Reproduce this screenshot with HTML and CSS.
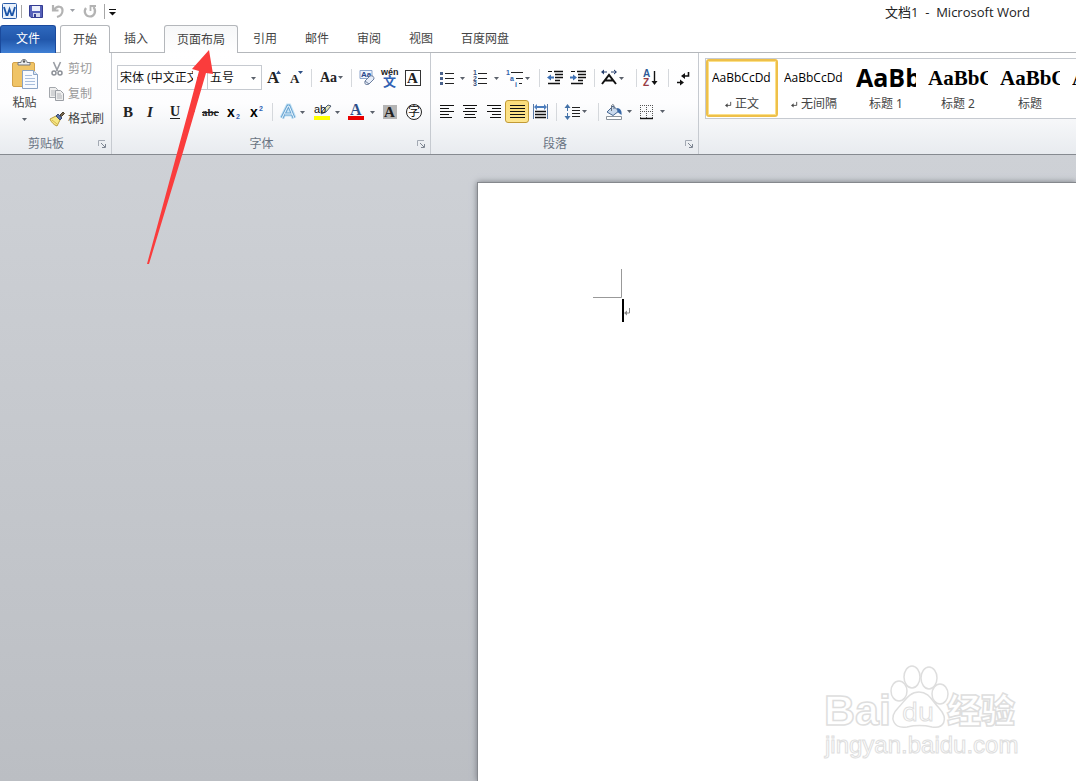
FILE: index.html
```html
<!DOCTYPE html>
<html lang="zh-CN">
<head>
<meta charset="utf-8">
<title>文档1 - Microsoft Word</title>
<link rel="stylesheet" href="styles.css">
</head>
<body>
<svg class="defs" aria-hidden="true">
  <defs>
    <symbol id="caret" viewBox="0 0 5 3"><path d="M0 0h5L2.500 3z" fill="#5b616b"/></symbol>
    <symbol id="launch" viewBox="0 0 9 9"><path d="M.5 6V.5H7" fill="none" stroke="#a3a9b3"/><path d="M3 3l4 4M7.500 4v3.500H4" fill="none" stroke="#7d8591"/></symbol>
    <symbol id="ret" viewBox="0 0 8 8"><path d="M6.500 1v4H2" fill="none" stroke="#444"/><path d="M0 5l3-2.500v5z" fill="#444"/></symbol>
  </defs>
</svg>
<div class="app">
  <header class="titlebar">
    <div class="quick">
      <svg width="118" height="24" viewBox="0 0 118 24">
        <rect x="2.500" y="3.500" width="14" height="15" rx="1" fill="#e9f1fb" stroke="#2a5ca8"/>
        <path d="M4 7l2.500 8h1l2-6 2 6h1L15 7" fill="none" stroke="#1d56a8" stroke-width="1.800"/>
        <path d="M21.500 5v13M104.500 4v15" stroke="#a6a6a6"/>
        <path d="M29.500 5.500h13v12H31l-1.500-1.500z" fill="#5560b8" stroke="#343c92"/>
        <path d="M32 6h8v5h-8z" fill="#eef1fb"/><path d="M33 13h7v4h-7z" fill="#d4d8ee"/><path d="M34 14h2v3h-2z" fill="#343c92"/>
        <path d="M53 5v5.500h5.500M54 10c3-5 9-4 8.500 1-.2 3-2 5-5.500 6" fill="none" stroke="#b3b3b3" stroke-width="2.200"/>
        <use href="#caret" x="70" y="9" width="5" height="3" opacity=".6"/>
        <path d="M86 8c-3 4 0 8.500 4 8.500s7-5 3.500-9.500" fill="none" stroke="#b3b3b3" stroke-width="2.200"/><path d="M90.500 11V6H96" fill="none" stroke="#b3b3b3" stroke-width="1.800"/>
        <path d="M109 9.500h7" stroke="#111"/><path d="M109 12h7l-3.500 3.500z" fill="#111"/>
      </svg>
    </div>
    <h1 class="title">文档1&nbsp; -&nbsp; Microsoft Word</h1>
  </header>

  <nav class="tabs">
    <button class="tab file">文件</button>
    <button class="tab active">开始</button>
    <button class="tab">插入</button>
    <button class="tab hover">页面布局</button>
    <button class="tab">引用</button>
    <button class="tab">邮件</button>
    <button class="tab">审阅</button>
    <button class="tab">视图</button>
    <button class="tab">百度网盘</button>
  </nav>

  <main class="ribbon">
    <section class="group clipboard">
      <div class="clip-body">
        <button class="paste">
          <svg width="28" height="32" viewBox="0 0 28 32">
            <rect x="1.500" y="4.500" width="22" height="24" rx="1.500" fill="#f0c466" stroke="#d3a24a"/>
            <path d="M7 7V4.500h3C10 .5 16 .5 16 4.500h3V7z" fill="#eceef0" stroke="#72777e"/><circle cx="13" cy="3.500" r="1.200" fill="#555"/>
            <path d="M11.500 12.500h11l4 4v14h-15z" fill="#f8fbff" stroke="#8aa3c4"/><path d="M22.500 12.500v4h4" fill="#d8e5f5" stroke="#8aa3c4"/>
            <path d="M14 17.500h7M14 20.500h10M14 23.500h10M14 26.500h10" stroke="#a9bfdd"/>
          </svg>
          <span>粘贴</span>
          <svg width="5" height="3"><use href="#caret"/></svg>
        </button>
        <div class="clip-list">
          <button class="item off" disabled>
            <svg width="16" height="16" viewBox="0 0 16 16"><path d="M4.500 1l4 9M11.500 1l-4 9" stroke="#999da4" stroke-width="1.600"/><circle cx="5" cy="12" r="2" fill="none" stroke="#8c9097" stroke-width="1.500"/><circle cx="11" cy="12" r="2" fill="none" stroke="#8c9097" stroke-width="1.500"/></svg>剪切</button>
          <button class="item off" disabled>
            <svg width="16" height="16" viewBox="0 0 16 16"><path d="M.5 1.500h6l2 2v8h-8z" fill="#eee" stroke="#a3a7ac"/><path d="M2 5h4M2 7h4M2 9h4" stroke="#b6b9bd"/><path d="M6.500 4.500h5l3 3v7h-8z" fill="#eee" stroke="#9a9ea4"/><path d="M8 8h4M8 10h5M8 12h5" stroke="#b0b3b8"/></svg>复制</button>
          <button class="item">
            <svg width="16" height="16" viewBox="0 0 16 16"><path d="M1 8l6-3 4 4-3 6C5 14 2 11 1 8z" fill="#f7e884" stroke="#b99c3c"/><path d="M3 9l5 4" stroke="#d5b650"/><path d="M7 5l2-2 4 4-2 2z" fill="#5b72a4" stroke="#3c4d74"/><path d="M11 4l3-3 1.500 1.500-3 3z" fill="#77664e" stroke="#4a4031"/></svg>格式刷</button>
        </div>
      </div>
      <footer class="foot"><span>剪贴板</span><button aria-label="剪贴板选项"><svg width="9" height="9"><use href="#launch"/></svg></button></footer>
    </section>

    <section class="group font">
      <div class="rows">
        <div class="row first">
          <label class="combo name"><select aria-label="字体"><option>宋体 (中文正文)</option></select><svg width="5" height="3"><use href="#caret"/></svg></label>
          <label class="combo size"><select aria-label="字号"><option>五号</option></select><svg width="5" height="3"><use href="#caret"/></svg></label>
          <button class="w23" aria-label="增大字体"><svg width="23" height="24"><text x="5" y="17" class="serif" font-size="17">A</text><path d="M14 8l2.500-3.500L19 8z" fill="#2e5086"/></svg></button>
          <button class="w23" aria-label="缩小字体"><svg width="23" height="24"><text x="5" y="17" class="serif" font-size="13">A</text><path d="M13 5h5l-2.500 3z" fill="#2e5086"/></svg></button>
          <i class="sep"></i>
          <button class="w34" aria-label="更改大小写"><svg width="34" height="24"><text x="5" y="16" class="serif" font-size="14">Aa</text><use href="#caret" x="23" y="10" width="5" height="3"/></svg></button>
          <i class="sep"></i>
          <button class="w23" aria-label="清除格式"><svg width="23" height="24"><path d="M5 4.500h12v8H5z" fill="#edf3fc" stroke="#8ba3ca"/><text x="6" y="11" class="sans" font-size="8" font-weight="bold" fill="#26468a">Aa</text><path d="M10 15l5-5q4-1 4 3l-5 5q-5 2-4-3z" fill="#e7edf8" stroke="#6d7f9e"/><path d="M10 15l4 3" stroke="#6d7f9e"/></svg></button>
          <button class="w23" aria-label="拼音指南"><svg width="23" height="24"><text x="3" y="9" class="sans" font-size="9" font-weight="bold" fill="#222">wén</text><text x="5" y="20" class="cjk" font-size="13" font-weight="bold" fill="#2f61b3">文</text></svg></button>
          <button class="w23" aria-label="字符边框"><svg width="23" height="24"><rect x="4.500" y="4.500" width="15" height="15" fill="#fff" stroke="#333"/><text x="6" y="17" class="serif" font-size="15">A</text></svg></button>
        </div>
        <div class="row second">
          <button class="w23" aria-label="加粗"><svg width="23" height="24"><text x="6" y="17" class="serif" font-size="15">B</text></svg></button>
          <button class="w23" aria-label="倾斜"><svg width="23" height="24"><text x="7" y="17" class="serif" font-size="15" font-style="italic">I</text></svg></button>
          <button class="w36" aria-label="下划线"><svg width="36" height="24"><text x="7" y="16" class="serif" font-size="14">U</text><path d="M7 18.500h10" stroke="#222"/><use href="#caret" x="27" y="11" width="5" height="3"/></svg></button>
          <button class="w23" aria-label="删除线"><svg width="23" height="24"><text x="3" y="16" class="serif" font-size="11">abc</text><path d="M3 12.500h17" stroke="#222"/></svg></button>
          <button class="w23" aria-label="下标"><svg width="23" height="24"><text x="5" y="17" class="sans" font-size="14" font-weight="bold">x</text><text x="14" y="19" class="sans" font-size="7" font-weight="bold" fill="#2f61b3">2</text></svg></button>
          <button class="w23" aria-label="上标"><svg width="23" height="24"><text x="5" y="17" class="sans" font-size="14" font-weight="bold">x</text><text x="14" y="11" class="sans" font-size="7" font-weight="bold" fill="#2f61b3">2</text></svg></button>
          <i class="sep"></i>
          <button class="w34" aria-label="文本效果"><svg width="34" height="24"><path d="M5 18L11 6h1l5 12M8 14h7" fill="none" stroke="#c3e2f5" stroke-width="5"/><path d="M5 18L11 6h1l5 12M8 14h7" fill="none" stroke="#6ba5d2" stroke-width="3"/><path d="M5 18L11 6h1l5 12M8 14h7" fill="none" stroke="#edf8ff"/><use href="#caret" x="23" y="11" width="5" height="3"/></svg></button>
          <button class="w34" aria-label="突出显示"><svg width="34" height="24"><path d="M3 16h16v4H3z" fill="#ff0"/><path d="M10 14l2-4 5-5 3 1-5 6z" fill="#e7e5b9" stroke="#4d5b70"/><text x="3" y="13" class="sans" font-size="11" fill="#111">ab</text><use href="#caret" x="24" y="11" width="5" height="3"/></svg></button>
          <button class="w34" aria-label="字体颜色"><svg width="34" height="24"><text x="5" y="15" class="serif blue" font-size="16">A</text><path d="M3 16h16v4H3z" fill="#e80000"/><use href="#caret" x="25" y="11" width="5" height="3"/></svg></button>
          <button class="w23" aria-label="字符底纹"><svg width="23" height="24"><path d="M4 5h14v14H4z" fill="#b5b5b5"/><text x="5" y="17" class="serif" font-size="15">A</text></svg></button>
          <button class="w23" aria-label="带圈字符"><svg width="23" height="24"><circle cx="12" cy="12" r="7.500" fill="#fff" stroke="#222"/><text x="6" y="16" class="cjk" font-size="12" fill="#111">字</text></svg></button>
        </div>
      </div>
      <footer class="foot"><span>字体</span><button aria-label="字体选项"><svg width="9" height="9"><use href="#launch"/></svg></button></footer>
    </section>

    <section class="group para">
      <div class="rows">
        <div class="row">
          <button class="w34" aria-label="项目符号"><svg width="34" height="24"><path d="M4 6h3v3H4zM4 11h3v3H4zM4 16h3v3H4z" fill="#4a628c"/><path d="M9 7.500h9M9 12.500h9M9 17.500h9" stroke="#222"/><use href="#caret" x="24" y="11" width="5" height="3"/></svg></button>
          <button class="w34" aria-label="编号"><svg width="34" height="24"><g class="sans" font-size="7" font-weight="bold" fill="#3a527e"><text x="4" y="9">1</text><text x="4" y="15">2</text><text x="4" y="20">3</text></g><path d="M9 7.500h9M9 12.500h9M9 17.500h9" stroke="#222"/><use href="#caret" x="25" y="11" width="5" height="3"/></svg></button>
          <button class="w34" aria-label="多级列表"><svg width="34" height="24"><g class="sans" font-size="7" font-weight="bold" fill="#2f61a8"><text x="4" y="9">1</text><text x="8" y="15">a</text><text x="13" y="21">i</text></g><path d="M9 6.500h12M14 12.500h7M17 17.500h3" stroke="#222"/><use href="#caret" x="23" y="11" width="5" height="3"/></svg></button>
          <i class="sep"></i>
          <button class="w23" aria-label="减少缩进"><svg width="23" height="24"><path d="M10 5.500h9M11 8.500h8M11 11.500h8M11 14.500h5M4 17.500h12" stroke="#111" stroke-width="1.500"/><path d="M8 5.500H4" stroke="#111"/><path d="M3 11.500l4-3v2h3v2H7v2z" fill="#3e71b5"/></svg></button>
          <button class="w23" aria-label="增加缩进"><svg width="23" height="24"><path d="M10 5.500h9M11 8.500h8M11 11.500h8M11 14.500h5M4 17.500h12" stroke="#111" stroke-width="1.500"/><path d="M8 5.500H4" stroke="#111"/><path d="M10 11.500l-4-3v2H3v2h3v2z" fill="#3e71b5"/></svg></button>
          <i class="sep"></i>
          <button class="w34" aria-label="中文版式"><svg width="34" height="24"><path d="M3 18l7-9 7 9M6 14.500h8" fill="none" stroke="#111" stroke-width="2"/><path d="M2 6l3-2.500v5zM18 6l-3-2.500v5zM4 5.500h4v1H4zM12 5.500h4v1h-4z" fill="#263e6c"/><use href="#caret" x="20" y="11" width="5" height="3"/></svg></button>
          <i class="sep"></i>
          <button class="w23" aria-label="排序"><svg width="23" height="24"><text x="2" y="11" class="sans" font-size="10" font-weight="bold" fill="#2e5b98">A</text><text x="2" y="20" class="sans" font-size="10" font-weight="bold" fill="#983c45">Z</text><path d="M13.500 5v12" stroke="#111" stroke-width="1.400"/><path d="M10.500 15h6l-3 4z" fill="#111"/></svg></button>
          <i class="sep"></i>
          <button class="w23" aria-label="显示标记"><svg width="23" height="24"><path d="M15.500 6v4H11M4 16.500h5" fill="none" stroke="#111" stroke-width="1.600"/><path d="M8 10l4-3v6zM11 16.500l-4-3v6z" fill="#111"/></svg></button>
        </div>
        <div class="row">
          <button class="w23" aria-label="左对齐"><svg width="23" height="24"><path d="M4 5.500h14M4 8.500h9M4 11.500h14M4 14.500h9M4 17.500h12" stroke="#111"/></svg></button>
          <button class="w23" aria-label="居中"><svg width="23" height="24"><path d="M4 5.500h14M6 8.500h10M4 11.500h14M6 14.500h10M5 17.500h12" stroke="#111"/></svg></button>
          <button class="w23" aria-label="右对齐"><svg width="23" height="24"><path d="M5 5.500h14M10 8.500h9M5 11.500h14M10 14.500h9M8 17.500h11" stroke="#111"/></svg></button>
          <button class="w23 on" aria-label="两端对齐"><svg width="23" height="22"><path d="M4 4.500h15M4 7.500h15M4 10.500h15M4 13.500h15M4 16.500h15" stroke="#111"/></svg></button>
          <button class="w23" aria-label="分散对齐"><svg width="23" height="24"><path d="M4.500 4v15M18.500 4v15" stroke="#597aa8"/><path d="M5 7l3-3v2h7V4l3 3-3 3V8H8v2z" fill="#4b7dbe"/><path d="M6 11.500h11M6 14.500h11M6 17.500h11" stroke="#111" stroke-width="1.500"/></svg></button>
          <i class="sep"></i>
          <button class="w34" aria-label="行距"><svg width="34" height="24"><path d="M6.500 6v12" stroke="#4472a8" stroke-dasharray="5 2"/><path d="M3.500 8l3-4 3 4zM3.500 16l3 4 3-4z" fill="#4472a8"/><path d="M11 7.500h8M11 10.500h8M11 13.500h8M11 16.500h8" stroke="#222"/><use href="#caret" x="21" y="10" width="5" height="3"/></svg></button>
          <i class="sep"></i>
          <button class="w34" aria-label="底纹"><svg width="34" height="24"><path d="M3.500 16.500h15v3h-15z" fill="#fff" stroke="#8b939c"/><path d="M4 12l6-6 6 5-6 4.500z" fill="#c8d8ec" stroke="#476792"/><path d="M8.500 11V5.500q1.500-2 2.500 0V9" fill="none" stroke="#66717e"/><path d="M14 8c4 0 5 4 4.500 7l-4-3z" fill="#3767a5"/><use href="#caret" x="24" y="10" width="5" height="3"/></svg></button>
          <button class="w34" aria-label="边框"><svg width="34" height="24"><path d="M4.500 5v13M10.500 5v13M16.500 5v13M4 5.500h13M4 11.500h13" stroke="#555" stroke-dasharray="1 1"/><path d="M4 18.500h13" stroke="#111" stroke-width="1.400"/><use href="#caret" x="24" y="10" width="5" height="3"/></svg></button>
        </div>
      </div>
      <footer class="foot"><span>段落</span><button aria-label="段落选项"><svg width="9" height="9"><use href="#launch"/></svg></button></footer>
    </section>

    <section class="group styles">
      <div class="gallery">
        <button class="style chosen"><span class="demo body">AaBbCcDd</span><span class="cap"><svg width="7" height="7"><use href="#ret"/></svg>正文</span></button>
        <button class="style"><span class="demo body">AaBbCcDd</span><span class="cap"><svg width="7" height="7"><use href="#ret"/></svg>无间隔</span></button>
        <button class="style"><span class="demo h1">AaBb</span><span class="cap">标题 1</span></button>
        <button class="style"><span class="demo h2">AaBbC</span><span class="cap">标题 2</span></button>
        <button class="style"><span class="demo h2">AaBbC</span><span class="cap">标题</span></button>
        <button class="style"><span class="demo h2">AaBbC</span></button>
      </div>
    </section>
  </main>

  <div class="workspace">
    <article class="page">
      <svg class="corner" width="40" height="56" viewBox="0 0 40 56"><path d="M28.500 0v28.500H0" fill="none" stroke="#999"/><path d="M29 30h2v23h-2z" fill="#000"/><path d="M36.500 39v5H33" fill="none" stroke="#888"/><path d="M31 44l3-2.500v5z" fill="#888"/></svg>
      <svg class="mark" width="200" height="98" viewBox="0 0 200 98">
        <g fill="#fff" stroke="#dedede" stroke-width="1.500">
          <text x="2" y="62" class="sans" font-size="43" font-weight="bold">Bai</text>
          <ellipse cx="77" cy="28" rx="8" ry="10"/><ellipse cx="90" cy="14" rx="8" ry="11"/><ellipse cx="107" cy="15" rx="8" ry="11"/><ellipse cx="118" cy="31" rx="8" ry="10"/>
          <path d="M97 29c10 0 13 9 20 16 10 11 5 21-7 19-9-2-16-2-25 0-13 2-19-9-9-19 7-7 11-16 21-16z"/>
          <text x="80" y="58" class="round" font-size="26" stroke-width="1">du</text>
          <text x="125" y="60" class="cjk" font-size="34" font-weight="900">经验</text>
          <text x="3" y="90" class="sans" font-size="24" stroke-width="1">jingyan.baidu.com</text>
        </g>
      </svg>
    </article>
  </div>
  <svg class="pointer" width="90" height="220" viewBox="0 0 90 220"><path d="M69 2L52 21l7 2-9 34L7 216h2l34-112L66 25l7 1z" fill="#fa3c3c"/></svg>
</div>
</body>
</html>
```
FILE: styles.css
```css
* { box-sizing: border-box; }
body {
  margin: 0;
  font: 12px/16px "Noto Sans", "Noto Sans CJK SC", sans-serif;
  color: #444;
}
button { font: inherit; color: inherit; background: none; border: 0; padding: 0; margin: 0; }
svg { display: block; flex: none; }
.defs { position: absolute; width: 0; height: 0; }
.app { position: relative; min-height: 100vh; display: flex; flex-direction: column; overflow: hidden; }

.titlebar { height: 24px; display: flex; justify-content: space-between; align-items: center; background: #fff; }
.title { margin: 0; padding-right: 46px; font: 13px/24px "Open Sans", "Noto Sans CJK SC", sans-serif; color: #222; }

.tabs { display: flex; height: 29px; padding-top: 1px; border-bottom: 1px solid #b4b7bb; background: #fff; }
.tab { padding: 0 14px; height: 28px; color: #444; white-space: nowrap; }
.file { width: 56px; margin-right: 4px; padding-bottom: 2px; color: #fff; border: 1px solid #1b4a9c; border-bottom: 0; border-radius: 3px 3px 0 0; background: linear-gradient(#2e68bd, #2157ab 50%, #3f7fd4); }
.active { width: 50px; padding: 0; height: 28px; border: 1px solid #b4b7bb; border-bottom: 0; border-radius: 3px 3px 0 0; background: #fff; position: relative; margin-bottom: -1px; }
.hover { width: 74px; padding: 0; margin: 0 1px 0 2px; border: 1px solid #b4b7bb; border-bottom: 0; border-radius: 3px 3px 0 0; background: linear-gradient(#f6f7f8, #fff); }

.ribbon { display: flex; height: 102px; background: linear-gradient(#fff, #fdfdfe 50%, #e8ebef); border-bottom: 1px solid #868a90; }
.group { display: flex; flex-direction: column; justify-content: space-between; border-right: 1px solid #c6cad0; flex: none; }
.clipboard { width: 112px; }
.font { width: 319px; }
.para { width: 268px; }
.styles { flex: 1; min-width: 0; border: 0; overflow: hidden; justify-content: flex-start; padding: 5px 0 0 6px; }
.foot { display: flex; height: 20px; align-items: center; color: #697382; }
.foot span { flex: 1; text-align: center; }
.foot button { width: 19px; padding-left: 6px; }

.clip-body { display: flex; height: 78px; }
.paste { width: 49px; padding-top: 5px; display: flex; flex-direction: column; align-items: center; }
.paste span { padding: 5px 0 7px; }
.clip-list { display: flex; flex-direction: column; gap: 9px; padding-top: 8px; }
.item { display: flex; align-items: center; gap: 3px; height: 16px; white-space: nowrap; }
.off { color: #999; }

.rows { display: flex; flex-direction: column; gap: 9px; padding: 12px 0 0 5px; }
.row { display: flex; height: 25px; align-items: center; }
.row button { height: 24px; flex: none; }
.w23 { width: 23px; }
.w34 { width: 33px; }
.w36 { width: 36px; }
.sep { width: 1px; height: 18px; margin: 0 4px; background: #d5d8dc; flex: none; }
.first .sep { margin: 0 3px; }
.second .w34 { width: 34px; }
.combo { position: relative; height: 25px; border: 1px solid #c6cad0; background: #fff; }
.combo select { width: 100%; height: 23px; padding: 0 14px 0 2px; border: 0; appearance: none; background: none; font: inherit; color: #111; text-overflow: clip; }
.combo svg { position: absolute; right: 5px; top: 11px; }
.name { width: 91px; }
.size { width: 54px; border-left: 0; }
.row .on { height: 23px; width: 24px; border: 1px solid #c29a35; border-radius: 3px; background: linear-gradient(#fbdc7b, #fde58e); }

.serif { font-family: "Liberation Serif", serif; font-weight: bold; fill: #222; }
.blue { fill: #2f4f88; }
.sans { font-family: "Liberation Sans", sans-serif; }
.cjk { font-family: "Noto Sans CJK SC", sans-serif; }
.round { font-family: "Noto Sans", sans-serif; }

.gallery { display: flex; height: 61px; border: 1px solid #c6cad0; border-right: 0; background: #fff; overflow: hidden; }
.style { width: 72px; height: 58px; flex: none; display: flex; flex-direction: column; align-items: center; padding: 2px; }
.chosen { border: 2px solid #eec04a; border-radius: 3px; box-shadow: inset 0 0 0 1px #fbe08a; padding: 0; }
.demo { width: 60px; height: 32px; line-height: 34px; overflow: hidden; white-space: nowrap; color: #000; text-align: left; }
.body { font-family: "Open Sans", sans-serif; font-size: 12px; }
.h1 { font-family: "Open Sans", sans-serif; font-weight: bold; font-size: 25px; line-height: 32px; }
.h2 { font-family: "Liberation Serif", serif; font-weight: bold; font-size: 21px; }
.cap { display: flex; align-items: center; gap: 3px; padding-top: 3px; white-space: pre; }

.workspace { flex: 1; display: flex; padding: 27px 0 0 477px; background: linear-gradient(#ced1d6, #bbbec3); }
.page { position: relative; flex: 1; background: #fff; border: 1px solid #85888d; border-width: 1px 0 0 1px; box-shadow: 0 0 6px #777b82; }
.corner { position: absolute; left: 115px; top: 86px; }
.mark { position: absolute; right: 54px; bottom: 20px; }
.pointer { position: absolute; left: 140px; top: 48px; pointer-events: none; }
```
